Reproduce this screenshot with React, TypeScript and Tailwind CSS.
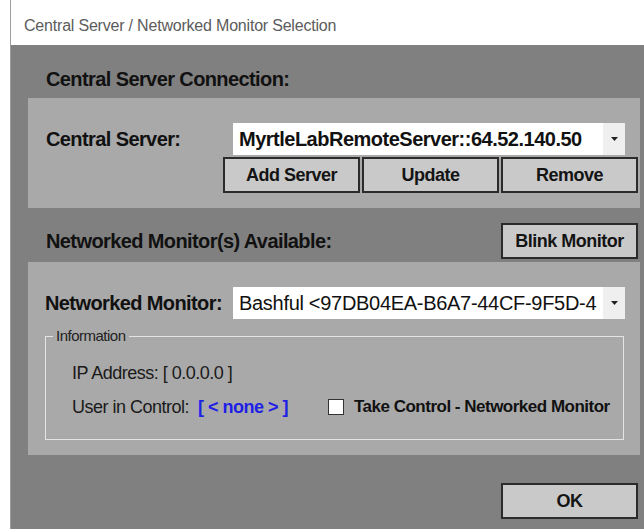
import React from 'react';

function WinButton({ label }: { label: string }) {
  return (
    <button className="h-[36px] w-[137px] border-2 border-[#2b2b2b] bg-[#c9c9c9] text-[18px] font-bold tracking-[-0.5px] text-[#141414]">
      {label}
    </button>
  );
}

function ComboBox({ value, bold }: { value: string; bold?: boolean }) {
  return (
    <div className="flex h-[32px] w-[392px] items-center bg-white">
      <span
        className={`flex-1 overflow-hidden whitespace-nowrap pl-[6px] text-[20px] text-[#111] ${
          bold ? 'font-bold tracking-[-0.5px]' : 'tracking-[-0.3px]'
        }`}
      >
        {value}
      </span>
      <span className="flex h-full w-[22px] items-center justify-center bg-[#efefef]">
        <svg width="7" height="4" viewBox="0 0 7 4">
          <path d="M0 0h7L3.5 4z" fill="#222" />
        </svg>
      </span>
    </div>
  );
}

export default function App() {
  return (
    <div className="flex h-[529px] w-[644px] overflow-hidden bg-white font-['Liberation_Sans',Arial,sans-serif] text-[#111]">
      <div className="ml-[10px] flex flex-1 flex-col border-l border-[#9d9d9d]">
        {/* title bar */}
        <div className="flex h-[45px] shrink-0 items-center bg-white pl-[13px] pt-[6px] text-[16px] tracking-[-0.2px] text-[#5c5c5c]">
          Central Server / Networked Monitor Selection
        </div>

        <div className="flex flex-1 flex-col bg-[#808080] pl-[17px] pr-[4px]">
          <div className="h-[53px] pl-[18px] pt-[23px] text-[20px] font-bold leading-[22px] tracking-[-0.6px]">
            Central Server Connection:
          </div>

          {/* server panel */}
          <div className="flex flex-col bg-[#a9a9a9] pt-[25px] pb-[15px]">
            <div className="flex items-center pl-[18px]">
              <span className="w-[187px] text-[20px] font-bold tracking-[-0.6px]">Central Server:</span>
              <ComboBox value="MyrtleLabRemoteServer::64.52.140.50" bold />
            </div>
            <div className="mt-[2px] flex justify-end gap-[2px] pr-[2px]">
              <WinButton label="Add Server" />
              <WinButton label="Update" />
              <WinButton label="Remove" />
            </div>
          </div>

          <div className="mt-[15px] mb-[3px] flex items-center justify-between pl-[18px] pr-[2px]">
            <span className="text-[20px] font-bold tracking-[-0.6px]">Networked Monitor(s) Available:</span>
            <WinButton label="Blink Monitor" />
          </div>

          {/* monitor panel */}
          <div className="flex flex-col bg-[#a9a9a9] pt-[25px] pb-[15px]">
            <div className="flex items-center pl-[17px]">
              <span className="w-[188px] text-[20px] font-bold tracking-[-0.6px]">Networked Monitor:</span>
              <ComboBox value="Bashful <97DB04EA-B6A7-44CF-9F5D-4" />
            </div>
            <fieldset className="mt-[9px] ml-[17px] mr-[16px] border border-[#e4e4e4]">
              <legend className="ml-[7px] px-[3px] text-[15px] leading-[16px] tracking-[-0.5px] text-[#222]">
                Information
              </legend>
              <div className="pl-[26px] pt-[18px] pb-[21px] text-[18px] leading-[22px] tracking-[-0.5px] text-[#1a1a1a]">
                <div>IP Address: [ 0.0.0.0 ]</div>
                <div className="mt-[12px] flex h-[22px] items-center">
                  <span className="w-[126px]">User in Control:</span>
                  <span className="w-[130px] font-bold text-[#1f1fe6]">[ &lt; none &gt; ]</span>
                  <span className="h-[16px] w-[16px] border border-[#333] bg-white" />
                  <span className="ml-[10px] text-[17px] font-bold text-[#111]">Take Control - Networked Monitor</span>
                </div>
              </div>
            </fieldset>
          </div>

          <div className="mt-[28px] flex justify-end pr-[2px]">
            <WinButton label="OK" />
          </div>
        </div>
      </div>
    </div>
  );
}
